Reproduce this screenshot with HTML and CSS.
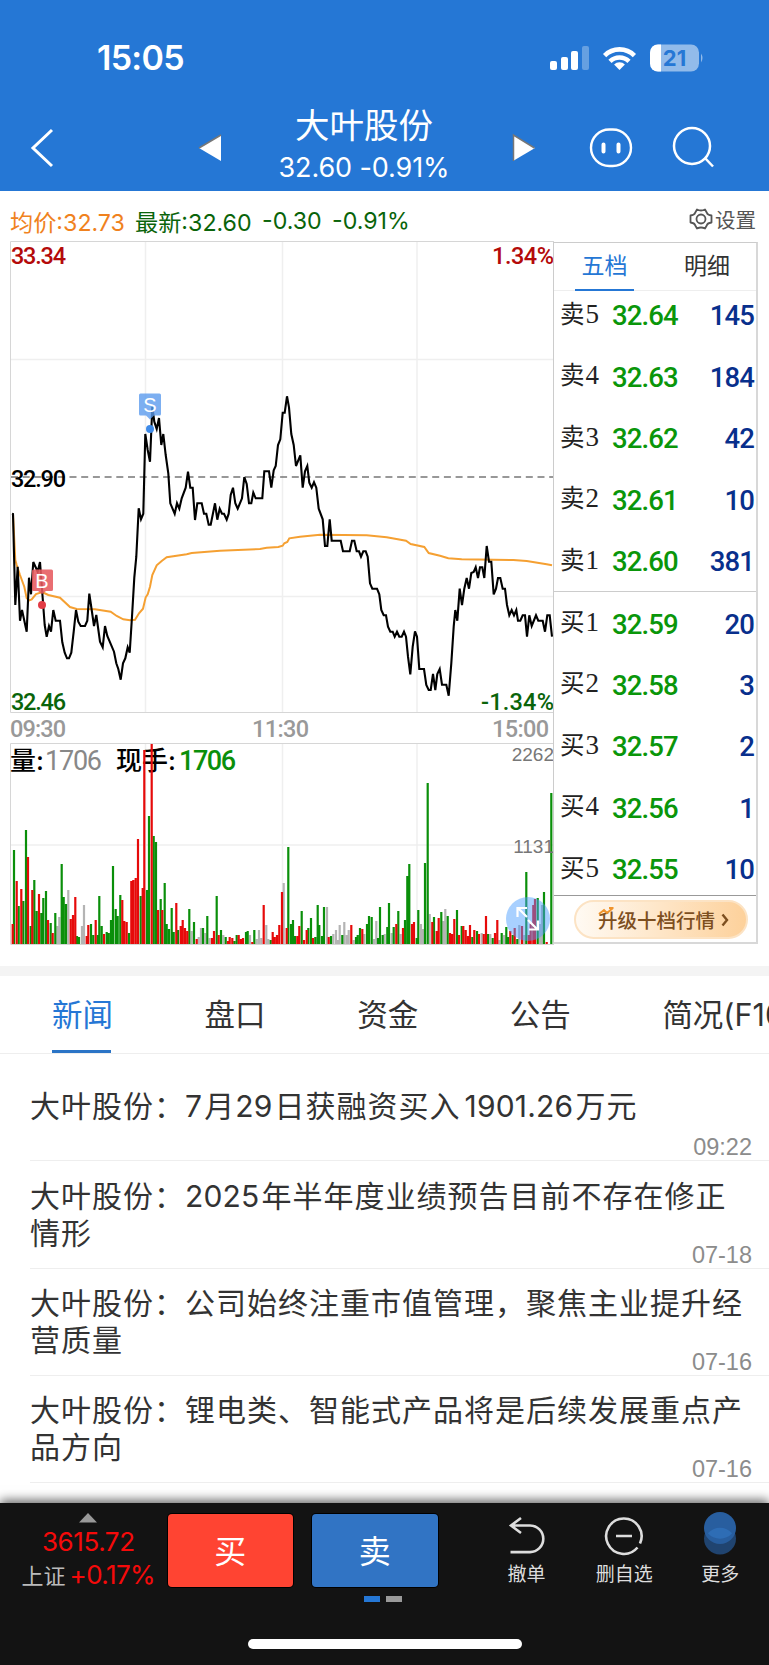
FILE: index.html
```html
<!DOCTYPE html>
<html lang="zh-CN">
<head>
    <meta charset="UTF-8">
    <meta name="viewport" content="width=device-width, initial-scale=1.0">
    <title>大叶股份</title>
    <link rel="stylesheet" href="styles.css">
</head>
<body>
    <header class="header">
        <div class="status-bar">
            <span class="clock">15:05</span>
            <svg class="status-icons" width="154" height="30" viewBox="551 42 154 30">
                <g fill="#fff">
                    <rect x="551" y="60" width="7" height="9" rx="2"/>
                    <rect x="562" y="56" width="7" height="13" rx="2"/>
                    <rect x="572" y="50" width="7" height="19" rx="2"/>
                    <rect x="583" y="45" width="7" height="24" rx="2" opacity=".3"/>
                    <path d="M620.5 69l-5.4-5.6a7.6 7.6 0 0 1 10.8 0z"/>
                </g>
                <g fill="none" stroke="#fff" stroke-width="4.6">
                    <path d="M605.6 54.6a21 21 0 0 1 29.8 0"/>
                    <path d="M611 60.4a13.6 13.6 0 0 1 19 0"/>
                </g>
                <rect x="651" y="43.500" width="49" height="27" rx="8" fill="#fff" opacity=".5"/>
                <path d="M662 43.500h-3a8 8 0 0 0-8 8v11a8 8 0 0 0 8 8h3z" fill="#fff"/>
                <path d="M702 52.500q3 4.500 0 9z" fill="#fff" opacity=".5"/>
                <text x="675.500" y="65" text-anchor="middle" class="battery">21</text>
            </svg>
        </div>
        <div class="title-bar">
            <svg class="back" width="24" height="40" viewBox="0 0 24 40"><path d="M22 2L3 20l19 18" fill="none" stroke="#fff" stroke-width="3"/></svg>
            <svg class="prev" width="22" height="26" viewBox="0 0 22 26"><path d="M22 0v26L0 13z" fill="#fff"/><path d="M22 0L0 13" stroke="#777" stroke-width="1.500"/></svg>
            <div class="title">
                <h1>大叶股份</h1>
                <p>32.60 -0.91%</p>
            </div>
            <svg class="next" width="22" height="26" viewBox="0 0 22 26"><path d="M0 0v26l22-13z" fill="#fff"/><path d="M.500 26V0l21 13" fill="none" stroke="#777" stroke-width="1.500"/></svg>
            <svg class="robot" width="44" height="44" viewBox="0 0 44 44" fill="none" stroke="#fff">
                <rect x="2" y="3.500" width="40" height="36.500" rx="18.200" stroke-width="2.400"/>
                <path d="M14.500 18.500v7M29.500 18.500v7" stroke-width="4" stroke-linecap="round"/>
            </svg>
            <svg class="search" width="44" height="44" viewBox="0 0 44 44" fill="none" stroke="#fff" stroke-width="2.500">
                <circle cx="20" cy="20" r="18"/>
                <path d="M33 32l8 8.500"/>
            </svg>
        </div>
    </header>

    <div class="summary">
        <span class="avg">均价:32.73</span>
        <span class="last">最新:32.60</span>
        <span class="last diff">-0.30</span>
        <span class="last pct">-0.91%</span>
        <a class="setting">
            <svg width="24" height="24" viewBox="0 0 24 24" fill="none" stroke="#555" stroke-width="1.800" stroke-linejoin="round">
                <path d="M8 2.500q4 2 8 0l2 3.500q.5 2 4.500 2.500v7q-4 .5-4.500 2.500l-2 3.500q-4-2-8 0l-2-3.500q-.5-2-4.500-2.500v-7q4-.5 4.500-2.500z"/>
                <circle cx="12" cy="12" r="4.500"/>
            </svg>
            设置
        </a>
    </div>

    <div class="quote">
        <!-- 分时图 + 成交量 -->
        <svg class="chart" width="544" height="705" viewBox="10 241 544 705">
            <g class="grid">
                <path d="M145.500 242V712M282.500 242V712M417 242V712M11 359.500H553M11 596.500H553"/>
                <path d="M145.500 744V944M282.500 744V944M417 744V944M11 845H553"/>
            </g>
            <path class="frame" d="M10.500 944V743.500H554M10.500 712.500V241.500H554M10.500 712.500H554M10.500 944.500H554"/>
            <path class="middle" d="M11 477H553"/>
            <text class="din label-mid" x="11" y="487" textLength="55">32.90</text>
            <polyline class="avg-line" points="13,514 15.3,560 16.7,565 20,575 24.3,586.7 26.7,598.3 29.3,600.3 31.7,599.3 36,594 42.3,592 48.3,595 60,597.7 70,607 76.7,609 95,609.3 110.7,611.7 116.7,616 123.3,619.3 130,620.3 135,619.7 139,613.3 143,608.7 145.7,597.3 147.7,594.3 150,586.7 152.3,575 156.7,565.3 161.7,561 166.7,557.3 186.7,554.3 191.7,553 220,550.7 260,549 266.7,547.7 278.3,547 282.7,545.7 284.3,543.3 287.3,542 289.3,538.3 300,536.7 320,534.7 366.7,535.3 386.7,537.3 406,540.7 410.7,544 424.3,547 428.7,553 440,555.7 448.3,558.3 461.7,559.3 513.3,560 526.7,561 546.7,564.3 552,565.3"/>
            <polyline class="price-line" points="12,513.7 13,514 15.3,605 17.7,566.7 20,620.7 22,610 26.7,631.7 29,577.7 31,594.3 33.3,562 37.7,571.7 40,562 42.3,593 44.7,625 46.7,636.7 49,626 51,631.7 53.3,610 55.7,620.7 60,620.7 62.3,642.3 64.7,652.7 67,658.3 69,658.3 71.3,652.7 73.7,631.7 76,610 78.3,621.7 80.7,626 85,626 87.3,620.7 89.3,593.7 91.7,610 94,626 96.3,615 100,641.7 102.7,647.3 105,626 107.3,636 114,651.7 116.3,663.3 118.3,669 120.7,679.7 123,663.3 125.3,658.3 127.7,647.3 129.7,652.7 132,616.7 134.3,577.7 136.3,556.7 138.7,508.3 141,519.3 143.3,513.7 145.3,434 147.7,450 150,461.7 152.3,406.7 154.3,421.7 156.7,429 159,418 161.3,445 163.3,434 165.7,455 168.3,473.3 170.3,503.3 174.7,513.7 177,503.3 179.3,508.7 181.7,498.3 185.7,487.7 188,471.7 190.3,487.7 192.7,487.7 195,520 197.3,503.3 201.7,503.3 204,513.7 206.3,513.7 208.7,524.7 210.7,524.7 215,503.3 217.3,519.7 219.7,508.7 222,513.7 224,513.7 226.7,519.7 228.7,513.7 230.7,495 233,487.7 235.3,503.3 237.7,508.7 242,498.3 244.3,477 246.7,484 249,503.3 251.3,503.3 253.3,492.7 255.7,498.3 262.3,498.3 264.3,471.3 269,471.3 271.3,487.7 273.7,470.3 275.7,466 278,445 280.3,439.3 282.7,412.7 284.7,412.7 287,396.3 289,407.3 291.3,434 293.7,445 296,466 300.3,455.3 302.7,487.7 305,471.3 307.3,466 309.3,482.7 311.7,487.7 314,482.3 316.3,487.7 318.7,508.7 322.7,519.3 325,546 327.3,546 329.7,519.3 331.7,540.7 340.7,540.7 343,551.3 349.7,551.3 352,540.7 354.3,540.7 356.7,551.3 359,551.3 361,556.7 363.3,551.3 365.7,551.3 367.7,556.7 370,583.3 372.3,588.7 377,588.7 379.3,594.3 381.3,610 383.7,615.3 386,615.3 388,626.7 390.3,631.7 392.7,631.7 394.7,636.7 397,631.7 399.3,636.7 401.7,636.7 404,631.7 406,636.7 408,656.7 410.3,674.3 412.7,646.7 415,631.3 417,636.7 419.3,669 424,669 426.3,685 428.7,690 430.7,690 433,674 435.3,690 437.3,674 439.7,669 442,684.7 446.3,684.7 448.7,695.7 451.3,663.3 453.7,626.7 455.3,610 457.3,620.7 459.7,588.7 462,605 464.3,588.7 466.7,578 469,588.7 471.3,573 473.7,572 475.7,567.3 478,578 480,567.3 482.3,567.3 484.3,578 486.7,546 489,561.7 491.3,561.7 493.7,594.3 496,588.7 498,578 500.3,578 502.7,588.7 505,588.7 507,605 509.3,615.3 511.7,610 514,615.3 516.3,610 518,620.7 520.3,620.7 522.7,615.3 525,615.3 527,636.7 529.3,615.3 531.7,626 536,615.3 538.3,620.7 542.7,620.7 545,631.7 547.3,615.3 549.7,615.3 552,636.7"/>

            <g class="sell-mark">
                <path d="M140.500 393.500h19a1.500 1.500 0 0 1 1.500 1.500v19a1.500 1.500 0 0 1-1.500 1.500h-5.500l-4 4-4-4h-5.500a1.500 1.500 0 0 1-1.500-1.500v-19a1.500 1.500 0 0 1 1.500-1.500z"/>
                <circle cx="150" cy="429" r="4"/>
                <text x="150" y="411.500">S</text>
            </g>
            <g class="buy-mark">
                <path d="M33.500 569.500h18a1.500 1.500 0 0 1 1.500 1.500v18.500a1.500 1.500 0 0 1-1.500 1.500h-5.500l-4 3-4-3h-4.500a1.500 1.500 0 0 1-1.500-1.500v-18.500a1.500 1.500 0 0 1 1.500-1.500z"/>
                <circle cx="42" cy="605" r="4"/>
                <text x="42" y="587.500">B</text>
            </g>

            <text class="din red" x="11" y="264" textLength="55">33.34</text>
            <text class="din red" x="492" y="264" textLength="62">1.34%</text>
            <text class="din green" x="11" y="710" textLength="55">32.46</text>
            <text class="din green" x="481" y="710" textLength="73">-1.34%</text>
            <text class="din gray" x="10" y="737" textLength="56">09:30</text>
            <text class="din gray" x="252" y="737" textLength="57">11:30</text>
            <text class="din gray" x="492" y="737" textLength="57">15:00</text>

            <text class="vol-name" x="10" y="770">量:</text>
            <text class="din gray-dark" x="45" y="770" textLength="57">1706</text>
            <text class="vol-name" x="116" y="770">现手:</text>
            <text class="din vol-now" x="179" y="770" textLength="57">1706</text>
            <g id="volume"></g>
            <text class="vol-scale" x="554" y="761">2262</text>
            <text class="vol-scale" x="554" y="853">1131</text>

            <circle cx="528" cy="919" r="22" fill="#4a9cff" opacity=".48"/>
            <path d="M527 917l-9-9M517.500 917v-9h9.500M528 920l9.500 9.500M529 929.500h9v-9" fill="none" stroke="#fff" stroke-width="2.200"/>
        </svg>

        <!-- 五档盘口 -->
        <div class="depth">
            <div class="depth-tabs">
                <span class="active">五档</span>
                <span>明细</span>
            </div>
            <div class="asks">
                <div class="level"><b>卖<i>5</i></b><em>32.64</em><strong>145</strong></div>
                <div class="level"><b>卖<i>4</i></b><em>32.63</em><strong>184</strong></div>
                <div class="level"><b>卖<i>3</i></b><em>32.62</em><strong>42</strong></div>
                <div class="level"><b>卖<i>2</i></b><em>32.61</em><strong>10</strong></div>
                <div class="level"><b>卖<i>1</i></b><em>32.60</em><strong>381</strong></div>
            </div>
            <div class="bids">
                <div class="level"><b>买<i>1</i></b><em>32.59</em><strong>20</strong></div>
                <div class="level"><b>买<i>2</i></b><em>32.58</em><strong>3</strong></div>
                <div class="level"><b>买<i>3</i></b><em>32.57</em><strong>2</strong></div>
                <div class="level"><b>买<i>4</i></b><em>32.56</em><strong>1</strong></div>
                <div class="level"><b>买<i>5</i></b><em>32.55</em><strong>10</strong></div>
            </div>
            <div class="upgrade">
                <a>升级十档行情
                    <svg width="8" height="14" viewBox="0 0 8 14"><path d="M1.500 1.500L6 7l-4.500 5.500" fill="none" stroke="#7d4f1f" stroke-width="2.400"/></svg>
                    <svg class="trend" width="17" height="9" viewBox="0 0 17 9"><path d="M1 7l5-4 3 3 6-5M11 1h4.500" fill="none" stroke="#f0942c" stroke-width="2"/></svg>
                </a>
            </div>
        </div>
    </div>

    <nav class="news-tabs">
        <a class="active">新闻</a>
        <a>盘口</a>
        <a>资金</a>
        <a>公告</a>
        <a>简况(F10)</a>
    </nav>

    <main class="news">
        <article class="single">
            <h2>大叶股份：<span>7</span>月<span>29</span>日获融资买入<span class="num">1901.26</span>万元</h2>
            <time>09:22</time>
        </article>
        <article>
            <h2>大叶股份：<span>2025</span>年半年度业绩预告目前不存在修正<br>情形</h2>
            <time>07-18</time>
        </article>
        <article>
            <h2>大叶股份：公司始终注重市值管理，聚焦主业提升经<br>营质量</h2>
            <time>07-16</time>
        </article>
        <article>
            <h2>大叶股份：锂电类、智能式产品将是后续发展重点产<br>品方向</h2>
            <time>07-16</time>
        </article>
    </main>

    <footer class="footer">
        <div class="toolbar">
            <div class="index">
                <svg width="18" height="10" viewBox="0 0 18 10"><path d="M9 0l9 9.500H0z" fill="#999"/></svg>
                <p class="point">3615.72</p>
                <p class="change">上证<span>+0.17%</span></p>
            </div>
            <button class="buy">买</button>
            <button class="sell">卖</button>
            <a class="tool undo">
                <svg width="40" height="42" viewBox="0 0 40 42" fill="none" stroke="#ddd" stroke-width="2.600"><path d="M14 3L4 10.500 14 18M4 10.500h19a13.300 13.300 0 0 1 0 26.600H3.500"/></svg>
                撤单
            </a>
            <a class="tool remove">
                <svg width="40" height="42" viewBox="0 0 40 42" fill="none" stroke="#ddd" stroke-width="2.600"><path d="M33.500 32.500A17.700 17.700 0 1 1 36 28.500M12 21h16"/></svg>
                删自选
            </a>
            <a class="tool more">
                <svg width="40" height="42" viewBox="0 0 40 42"><circle cx="20" cy="23.500" r="16" fill="#204470"/><circle cx="20" cy="13" r="16" fill="#285e9f"/><path d="M7.900 18.250a16 16 0 0 1 24.200 0a16 16 0 0 1-24.200 0z" fill="#2e6db5"/></svg>
                更多
            </a>
        </div>
        <div class="pager"><span class="on"></span><span></span></div>
        <div class="home-indicator"></div>
    </footer>

    <script>
        // 成交量柱: [x, 高度]
        const volume = {
            '#b4b4b4': [[57.3,18],[59.3,27],[68.3,54],[82,18],[84,39],[191.7,13],[198.7,7],[201,16],[205.3,11],[209.7,6],[223.3,9],[250,9],[256.7,5],[259,14],[261.3,6],[266.3,19],[268.3,5],[283.7,61],[327,37],[333.3,10],[336,14],[338,4],[339.7,19],[344.3,22],[346.7,9],[348.7,14],[353.7,4],[364.3,10],[374,5],[376.3,23],[384.7,10],[391.7,11],[400.7,10],[421,20],[423,15],[429.7,30],[443.3,23],[445.3,35],[481.7,11],[490.3,10],[499.3,4],[504,9],[519.3,19],[524.3,9],[540,20],[542,39]],
            '#0a8f0a': [[14,94],[18.7,38],[23.3,43],[26,114],[30.7,18],[34.3,64],[36.7,33],[41.3,31],[43.3,46],[46,53],[50.7,21],[55.3,31],[61.7,80],[63.7,47],[66,40],[77,8],[79,7],[91,20],[93.3,9],[97.7,9],[99.3,48],[101.7,18],[106.7,12],[108.7,11],[111,24],[113,78],[115.7,35],[117.7,28],[120.3,49],[129,11],[140.7,48],[147,54],[149,128],[153.7,108],[156,102],[160.7,45],[164.7,61],[166.7,20],[169,15],[171.7,36],[173.7,12],[178,14],[189.3,35],[194,22],[203,16],[207.3,28],[216.7,48],[221,14],[225.7,7],[234.3,3],[236.7,9],[246,12],[247.7,13],[254.3,14],[270.7,4],[288.3,97],[291,20],[293,24],[295,8],[301.7,33],[308.3,16],[311,26],[315.3,7],[317.7,39],[319.3,19],[322,8],[324,37],[331,8],[342.3,9],[356,7],[357.7,9],[360,16],[367,20],[369,28],[371.7,27],[378,6],[380,37],[382.7,9],[387.3,17],[389,41],[393.7,17],[398.3,33],[405,24],[407.3,68],[409.3,80],[416.7,6],[418.3,34],[425,81],[427.7,161],[434,27],[441.3,32],[447.7,28],[457,34],[461.7,18],[472.3,7],[477,13],[488,10],[492.7,6],[501.7,11],[506.3,17],[508.3,7],[512.7,9],[517.3,5],[526.3,72],[537.7,46],[544,52],[551.3,151]],
            '#e60a0a': [[12.7,20],[16.7,63],[21.3,55],[28,87],[32.3,54],[39,50],[48,24],[52.7,11],[70.7,25],[73,29],[75.3,47],[86.7,8],[88.3,19],[95.7,24],[104,10],[122.3,44],[124.3,23],[126.7,22],[131.3,63],[133.3,64],[135.7,66],[138,105],[142.7,56],[144.3,194],[151.7,200],[158,34],[162.3,34],[176.3,41],[180.7,18],[182.7,24],[185,16],[187.3,13],[196.7,5],[212,6],[214,13],[218.7,9],[228,3],[229.7,7],[232.3,6],[238.7,9],[241,5],[243,6],[252.3,2],[263.7,39],[272.7,12],[274.7,7],[277,9],[279.3,19],[282,52],[286.7,16],[297.3,8],[299.3,18],[304,4],[306.7,14],[313,6],[328.7,7],[351.3,19],[362.3,15],[396.3,20],[403,16],[412,20],[414,22],[432.3,22],[436.7,13],[438.7,26],[450,11],[452,10],[454.3,25],[459,9],[463.3,18],[465.7,14],[468,8],[470,19],[474.3,14],[479,10],[483.7,10],[486,28],[495,11],[497.3,24],[510.3,13],[514.7,16],[522,18],[528.7,9],[530.7,20],[533.3,39],[535,45],[546.7,2]]
        };

        function renderVolume() {
            const group = document.getElementById('volume');
            for (const color in volume) {
                const path = document.createElementNS('http://www.w3.org/2000/svg', 'path');
                path.setAttribute('d', volume[color].map(bar => `M${bar[0]} 944v-${bar[1]}`).join(''));
                path.setAttribute('stroke', color);
                path.setAttribute('stroke-width', '2.2');
                group.appendChild(path);
            }
        }

        renderVolume();
    </script>
</body>
</html>
```

FILE: styles.css
```css
* {
    box-sizing: border-box;
    margin: 0;
    padding: 0;
}
body {
    width: 769px;
    height: 1665px;
    overflow: hidden;
    display: flex;
    flex-direction: column;
    background-color: #ffffff;
    color: #333;
    font-family: Inter, "Noto Sans CJK SC", sans-serif;
}
svg {
    display: block;
    flex-shrink: 0;
    overflow: visible;
}

/* 顶部 */
.header {
    height: 191px;
    flex-shrink: 0;
    background-color: #2577d5;
    color: #ffffff;
}
.status-bar {
    height: 103px;
    padding: 12px 65px 0 97px;
    display: flex;
    align-items: center;
    justify-content: space-between;
}
.clock {
    font-size: 34px;
    font-weight: 600;
    letter-spacing: -0.7px;
}
.battery {
    font-size: 22px;
    font-weight: 700;
    fill: #2577d5;
}
.title-bar {
    height: 88px;
    padding-left: 30px;
    padding-top: 2px;
    display: flex;
    align-items: center;
}
.prev {
    margin-left: 145px;
}
.title {
    width: 292px;
    text-align: center;
}
.title h1 {
    margin-top: -6px;
    font-size: 34.500px;
    font-weight: 400;
    line-height: 46px;
    padding-right: 6px;
}
.title p {
    font-size: 27px;
    line-height: 38px;
    letter-spacing: -0.1px;
    padding-right: 6px;
}
.robot {
    margin-left: 54px;
}
.search {
    margin-left: 39px;
}

/* 均价一行 */
.summary {
    height: 50px;
    flex-shrink: 0;
    padding: 10px 13px 0 10px;
    display: flex;
    align-items: center;
    font-size: 23.200px;
}
.avg {
    width: 125px;
    color: #f0821e;
}
.last {
    width: 127px;
    color: #0a640a;
}
.diff {
    width: 70px;
}
.pct {
    width: auto;
}
.setting {
    margin-left: auto;
    margin-top: -5px;
    display: flex;
    align-items: center;
    gap: 2px;
    font-size: 20.500px;
    color: #555;
}

/* 行情区 */
.quote {
    height: 725px;
    flex-shrink: 0;
    padding-left: 10px;
    display: flex;
}
.grid path {
    stroke: #efefef;
    stroke-width: 1.500;
}
.frame {
    fill: none;
    stroke: #d6d6d6;
}
.middle {
    stroke: #777;
    stroke-width: 1.400;
    stroke-dasharray: 7 4.700;
}
.avg-line {
    fill: none;
    stroke: #f5a032;
    stroke-width: 2;
}
.price-line {
    fill: none;
    stroke: #000;
    stroke-width: 2.100;
}
.din {
    font-family: Roboto, sans-serif;
    font-size: 23.500px;
    font-weight: 500;
}
.red {
    fill: #b40a0a;
}
.green {
    fill: #0a640a;
}
.gray {
    fill: #999;
}
.gray-dark {
    fill: #888;
    font-size: 27px;
    font-weight: 400;
}
.vol-now {
    fill: #0a8f0a;
    font-size: 27px;
}
.vol-name {
    font-size: 26px;
    font-weight: 500;
    fill: #000;
}
.vol-scale {
    font-family: "Liberation Sans", sans-serif;
    font-size: 19px;
    text-anchor: end;
    fill: #777;
}
.sell-mark path {
    fill: #5b9bee;
    opacity: 0.8;
}
.sell-mark circle {
    fill: #3f8be8;
}
.buy-mark path {
    fill: #e65a5e;
    opacity: 0.88;
}
.buy-mark circle {
    fill: #e23c46;
}
.sell-mark text,
.buy-mark text {
    font-family: "Liberation Sans", sans-serif;
    font-size: 20px;
    text-anchor: middle;
    fill: #fff;
}

.depth {
    width: 205px;
    height: 702px;
    margin-top: 1px;
    margin-left: -1px;
    border: 1px solid #ccc;
    border-right: 2px solid #d8d8d8;
    border-bottom: 2px solid #d8d8d8;
}
.depth-tabs {
    height: 48px;
    padding: 0 21px;
    display: flex;
    justify-content: space-between;
    border-bottom: 1px solid #eee;
    font-size: 23px;
    line-height: 47px;
}
.depth-tabs span {
    width: 59px;
    height: 48px;
    text-align: center;
    white-space: nowrap;
}
.depth-tabs span:last-child {
    width: 56px;
}
.depth-tabs .active {
    color: #2577d5;
    border-bottom: 2px solid #2577d5;
}
.asks {
    display: flow-root;
    height: 301px;
    border-bottom: 1px solid #ccc;
}
.asks .level:first-child {
    margin-top: -8px;
}
.bids {
    height: 304px;
    border-bottom: 1px solid #999;
}
.level {
    height: 61.500px;
    padding: 0 2px 0 6px;
    display: flex;
    align-items: center;
}
.bids .level:first-child {
    height: 60.500px;
}
.level b {
    width: 52px;
    font-size: 24.500px;
    font-weight: 400;
    line-height: 36px;
    color: #222;
}
.level i {
    margin-left: 1px;
    font-family: "Liberation Serif", serif;
    font-size: 27px;
    font-style: normal;
}
.level em,
.level strong {
    font-family: Roboto, sans-serif;
    font-size: 27.500px;
    font-style: normal;
    font-weight: 500;
    letter-spacing: -0.9px;
    padding-top: 4px;
}
.level em {
    color: #0a960a;
}
.level strong {
    margin-left: auto;
    color: #082f8c;
}
.upgrade {
    padding: 4px 8px 0 20px;
}
.upgrade a {
    position: relative;
    height: 39px;
    padding-left: 22px;
    display: flex;
    align-items: center;
    gap: 6px;
    border: 2px solid #fce3c4;
    border-radius: 20px;
    background: linear-gradient(90deg, #fffaf3, #fdd19b);
    font-size: 19.500px;
    font-weight: 500;
    color: #7d4f1f;
}
.trend {
    position: absolute;
    left: 22px;
    top: 5px;
}

/* 新闻标签 */
.news-tabs {
    height: 88px;
    flex-shrink: 0;
    padding-left: 52px;
    display: flex;
    border-top: 10px solid #f4f4f4;
    border-bottom: 1px solid #eee;
    overflow: hidden;
    font-size: 30.500px;
    color: #333;
}
.news-tabs a {
    flex-shrink: 0;
    height: 78px;
    margin-right: 93.600px;
    padding-top: 15px;
    width: 59px;
    white-space: nowrap;
}
.news-tabs .active {
    color: #2577d5;
    border-bottom: 4px solid #2b74c6;
}

/* 新闻列表 */
.news {
    flex: 1;
}
.news article {
    height: 107.300px;
    margin-left: 30px;
    padding-top: 16.500px;
    display: grid;
    border-bottom: 1px solid #eee;
}
.news .single {
    padding-top: 34px;
}
.news h2,
.news time {
    grid-area: 1 / 1;
}
.news h2 {
    font-size: 30px;
    font-weight: 400;
    line-height: 37px;
    letter-spacing: 1px;
    white-space: nowrap;
}
.news h2 span {
    margin-right: 2px;
    letter-spacing: 0.2px;
}
.news h2 .num {
    margin-left: 4px;
}
.news time {
    align-self: end;
    justify-self: end;
    padding-right: 17px;
    font-family: "Liberation Sans", sans-serif;
    font-size: 23.500px;
    line-height: 26px;
    color: #8c8c8c;
}

/* 底部交易栏 */
.footer {
    position: relative;
    height: 162px;
    flex-shrink: 0;
    background-color: #131313;
    box-shadow: 0 -3px 10px rgba(0, 0, 0, 0.6);
    display: flex;
    flex-direction: column;
    align-items: center;
}
.toolbar {
    width: 769px;
    height: 93px;
    padding: 11px 19px 0 18px;
    display: flex;
    align-items: flex-start;
}
.index {
    width: 150px;
    padding-right: 9px;
    display: flex;
    flex-direction: column;
    align-items: center;
    white-space: nowrap;
    color: #f50a0a;
    line-height: 33px;
}
.index svg {
    margin-top: -1px;
}
.point {
    margin-top: 2px;
    font-size: 26px;
    letter-spacing: -0.4px;
}
.change {
    color: #bbb;
    font-size: 22px;
}
.change span {
    margin-left: 4px;
    color: #f50a0a;
    font-size: 26px;
    letter-spacing: -0.6px;
}
.buy,
.sell {
    width: 126px;
    height: 73px;
    padding-bottom: 4px;
    border: none;
    border-radius: 4px;
    box-shadow: 0 0 0 1px #000;
    color: #ffffff;
    font-family: "Noto Sans CJK SC", sans-serif;
    font-size: 32px;
}
.buy {
    background-color: #ff4432;
}
.sell {
    margin-left: 19px;
    background-color: #3174c4;
}
.tool {
    width: 60px;
    padding-top: 1px;
    display: flex;
    flex-direction: column;
    align-items: center;
    font-size: 19px;
    line-height: 36px;
    color: #ddd;
}
.undo {
    margin-left: 59px;
}
.remove {
    margin-left: 38px;
}
.more {
    margin-left: 36px;
}
.pager {
    display: flex;
    gap: 6px;
    margin-right: 4px;
}
.pager span {
    width: 16px;
    height: 6px;
    background-color: #999;
}
.pager .on {
    background-color: #2577d5;
}
.home-indicator {
    width: 274px;
    height: 10px;
    margin-top: 37px;
    border-radius: 5px;
    background-color: #ffffff;
}
```
